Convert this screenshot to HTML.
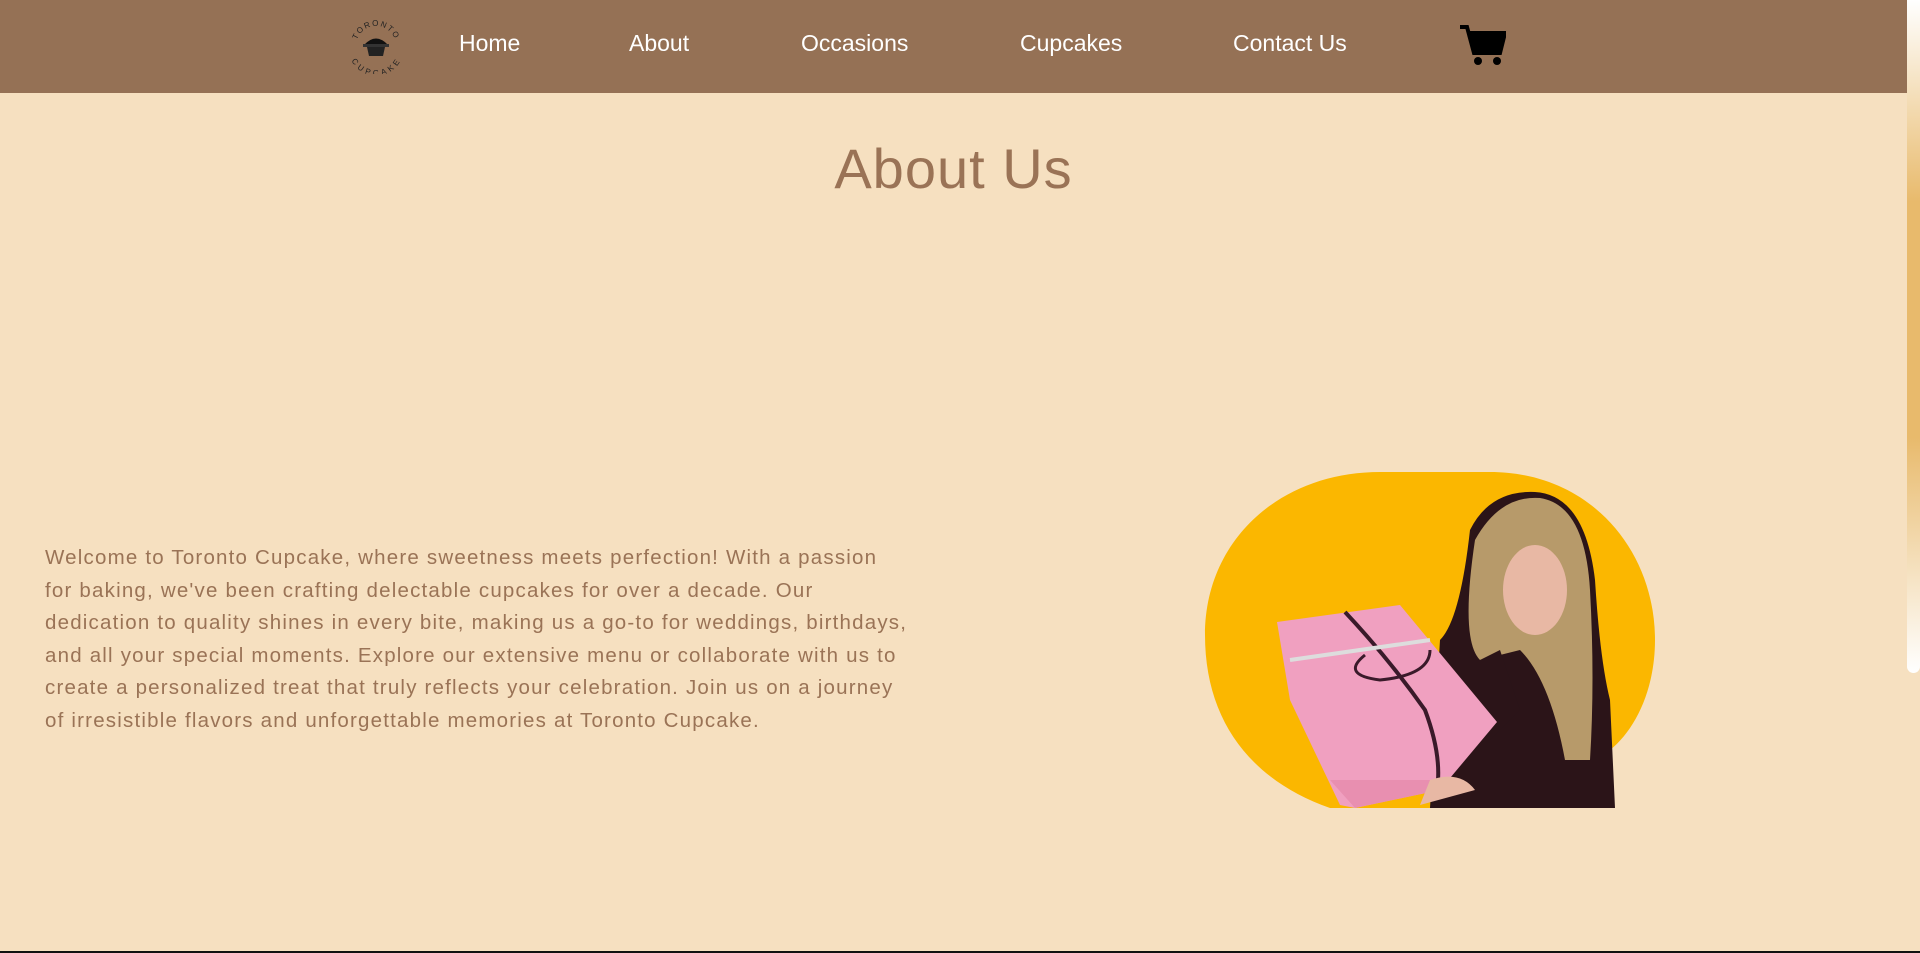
<!DOCTYPE html>
<html><head><meta charset="utf-8"><style>
html,body{margin:0;padding:0;}
body{width:1920px;height:953px;background:#f6e0c0;font-family:"Liberation Sans",sans-serif;position:relative;overflow:hidden;}
.nav{position:absolute;left:0;top:0;width:1907px;height:93px;background:#957155;}
.nav a{position:absolute;top:30px;color:#fff;font-size:23px;text-decoration:none;}
h1{position:absolute;left:0;width:1907px;top:136px;margin:0;text-align:center;font-weight:400;font-size:56px;color:#9a7356;letter-spacing:1px;}
p{position:absolute;left:45px;top:542px;width:866px;margin:0;font-size:20.5px;letter-spacing:1.2px;line-height:32.6px;color:#9a7356;}
.sb{position:absolute;left:1907px;top:0;width:13px;height:673px;border-radius:0 0 7px 7px;background:linear-gradient(#fff,#e8ba6c 30%,#e8ba6c 65%,#fff);}
.bl{position:absolute;left:0;top:951px;width:1920px;height:2px;background:#111;}
</style></head><body>
<div class="nav">
<svg style="position:absolute;left:348px;top:18px" width="56" height="56" viewBox="0 0 56 56">
<path id="t" d="M8 28 A20 20 0 0 1 48 28" fill="none"/>
<path id="b" d="M6 30 A22 22 0 0 0 50 30" fill="none"/>
<text font-size="8" fill="#222" font-family="Liberation Sans" letter-spacing="1.5"><textPath href="#t" startOffset="50%" text-anchor="middle">TORONTO</textPath></text>
<text font-size="8" fill="#222" font-family="Liberation Sans" letter-spacing="1.5"><textPath href="#b" startOffset="50%" text-anchor="middle" dominant-baseline="hanging">CUPCAKE</textPath></text>
<path d="M16 27 Q28 14 40 27 Z" fill="#111"/><rect x="15" y="26" width="26" height="3" fill="#333"/>
<path d="M19 29 H37 L35 38 H21 Z" fill="#222"/>
</svg>
<a style="left:459px">Home</a>
<a style="left:629px">About</a>
<a style="left:801px">Occasions</a>
<a style="left:1020px">Cupcakes</a>
<a style="left:1233px">Contact Us</a>
<svg style="position:absolute;left:1460px;top:24px" width="46" height="42" viewBox="0 0 46 42">
<path d="M0 3 H7 L14 29 H40 L45 9 H10" fill="none" stroke="#000" stroke-width="4"/>
<path d="M10 9 H45 L40 27 H14 Z" fill="#000"/>
<circle cx="18" cy="37" r="4" fill="#000"/><circle cx="37" cy="37" r="4" fill="#000"/>
</svg>
</div>
<h1>About Us</h1>
<p>Welcome to Toronto Cupcake, where sweetness meets perfection! With a passion for baking, we've been crafting delectable cupcakes for over a decade. Our dedication to quality shines in every bite, making us a go-to for weddings, birthdays, and all your special moments. Explore our extensive menu or collaborate with us to create a personalized treat that truly reflects your celebration. Join us on a journey of irresistible flavors and unforgettable memories at Toronto Cupcake.</p>
<svg style="position:absolute;left:1190px;top:460px" width="480" height="360" viewBox="0 0 480 360">
<path d="M140,348 C60,320 15,260 15,175 C15,80 90,12 190,12 L300,12 C400,12 465,90 465,180 C465,230 445,270 420,290 L420,348 Z" fill="#fbb700"/>
<path d="M280,70 Q300,30 345,32 Q395,35 405,120 Q410,200 420,240 L425,348 L240,348 L250,180 Q270,160 280,70 Z" fill="#2b1418"/>
<path d="M285,80 Q310,35 350,38 Q395,45 400,130 Q405,220 400,300 L375,300 Q360,220 330,190 L290,200 Q270,180 285,80 Z" fill="#b79a6a"/>
<ellipse cx="345" cy="130" rx="32" ry="45" fill="#e8b8a4"/>
<path d="M270,210 L310,190 L330,250 L300,280 Z" fill="#2b1418"/>
<path d="M87,162 L210,145 L307,262 L250,330 L165,348 L150,345 L100,240 Z" fill="#f0a0c0"/>
<path d="M140,320 L165,348 L250,330 L270,320 Z" fill="#e88fb0"/>
<path d="M155,152 Q200,200 235,250 Q250,290 248,320" fill="none" stroke="#3a1a2a" stroke-width="4"/>
<path d="M100,200 L240,180" stroke="#ddd" stroke-width="4"/>
<path d="M175,195 Q150,215 190,220 Q240,215 240,190" fill="none" stroke="#3a1a2a" stroke-width="3"/>
<path d="M240,320 Q270,310 285,330 L230,345 Z" fill="#e8b8a4"/>
</svg>
<div class="sb"></div>
<div class="bl"></div>
</body></html>
